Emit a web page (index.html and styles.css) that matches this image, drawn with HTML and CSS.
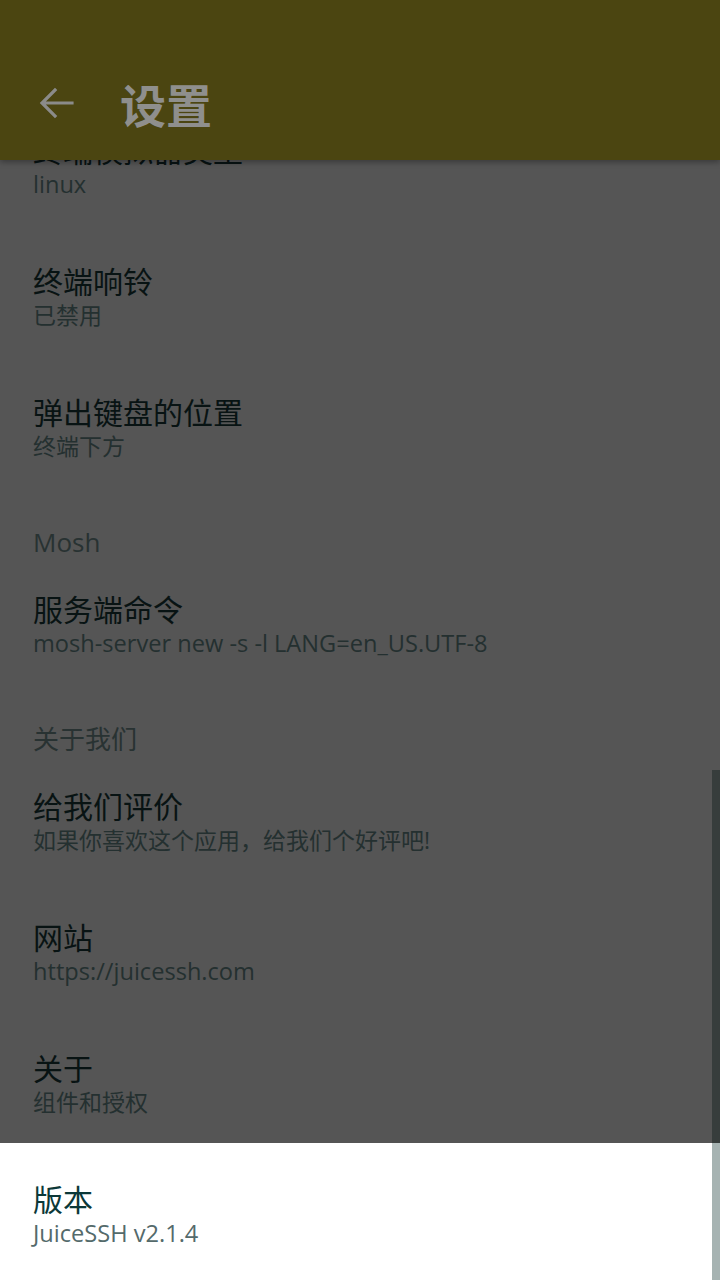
FILE: index.html
```html
<!DOCTYPE html>
<html lang="zh-CN">
<head>
<meta charset="utf-8">
<title>设置</title>
<link rel="stylesheet" href="styles.css">
</head>
<body>
<div class="screen">
  <header class="appbar">
    <svg class="back" viewBox="0 0 48 48" width="48" height="48" aria-hidden="true">
      <path d="M40 24H11 M23 11L10 24L23 37" fill="none" stroke="currentColor" stroke-width="3.2" stroke-linecap="square" stroke-linejoin="miter"/>
    </svg>
    <h1 class="title">设置</h1>
  </header>

  <main class="list">
    <div class="item">
      <div class="item-title">终端模拟器类型</div>
      <div class="item-sub latin">linux</div>
    </div>
    <div class="item">
      <div class="item-title">终端响铃</div>
      <div class="item-sub">已禁用</div>
    </div>
    <div class="item">
      <div class="item-title">弹出键盘的位置</div>
      <div class="item-sub">终端下方</div>
    </div>
    <div class="section">Mosh</div>
    <div class="item">
      <div class="item-title">服务端命令</div>
      <div class="item-sub latin">mosh-server new -s -l LANG=en_US.UTF-8</div>
    </div>
    <div class="section">关于我们</div>
    <div class="item">
      <div class="item-title">给我们评价</div>
      <div class="item-sub">如果你喜欢这个应用，给我们个好评吧!</div>
    </div>
    <div class="item">
      <div class="item-title">网站</div>
      <div class="item-sub latin">https://juicessh.com</div>
    </div>
    <div class="item">
      <div class="item-title">关于</div>
      <div class="item-sub">组件和授权</div>
    </div>
    <div class="item item-focus">
      <div class="item-title">版本</div>
      <div class="item-sub latin">JuiceSSH v2.1.4</div>
    </div>
  </main>

  <div class="scrollbar">
    <div class="scrollbar-dim"></div>
    <div class="scrollbar-lit"></div>
  </div>
</div>
</body>
</html>
```

FILE: styles.css
```css
* { box-sizing: border-box; }

html, body {
  margin: 0;
  padding: 0;
  background: #555555;
}

body {
  font-family: "Open Sans", "Noto Sans CJK SC", sans-serif;
}

.screen {
  position: relative;
  width: 720px;
  height: 1280px;
  overflow: hidden;
  background: #555555;
}

.appbar {
  position: absolute;
  top: 0;
  left: 0;
  right: 0;
  height: 160px;
  z-index: 3;
  background: #4b4511;
  box-shadow: 0 2px 6px rgba(0, 0, 0, 0.35);
  display: flex;
  align-items: center;
  padding: 46px 0 0 32px;
  color: #8b8b8a;
}

.back {
  display: block;
  flex: none;
}

.title {
  margin: 0 0 0 40px;
  font-family: "Noto Sans CJK SC", sans-serif;
  font-size: 46px;
  font-weight: 700;
  line-height: 50px;
  color: #8f8f8d;
}

.list {
  display: flex;
  flex-direction: column;
  padding-top: 94px;
}

.item {
  padding: 37px 33px 24px;
}

.item-title {
  font-family: "Noto Sans CJK SC", sans-serif;
  font-size: 30px;
  font-weight: 400;
  line-height: 36px;
  color: #081313;
}

.item-sub {
  font-family: "Open Sans", "Noto Sans CJK SC", sans-serif;
  font-size: 23px;
  line-height: 34px;
  color: #243030;
}

.item-sub.latin {
  font-size: 23.6px;
}

.section {
  height: 66px;
  padding: 42px 33px 0;
  font-family: "Open Sans", "Noto Sans CJK SC", sans-serif;
  font-size: 26px;
  line-height: 26px;
  color: #283232;
}

.item-focus {
  background: #ffffff;
  padding-bottom: 40px;
}

.item-focus .item-title {
  color: #0b3838;
}

.item-focus .item-sub {
  color: #546a6b;
}

.scrollbar {
  position: absolute;
  top: 770px;
  right: 0;
  width: 8px;
  height: 510px;
  z-index: 2;
  display: flex;
  flex-direction: column;
}

.scrollbar-dim {
  height: 373px;
  background: #373d3c;
}

.scrollbar-lit {
  flex: 1;
  background: #a6b3b2;
}
```
